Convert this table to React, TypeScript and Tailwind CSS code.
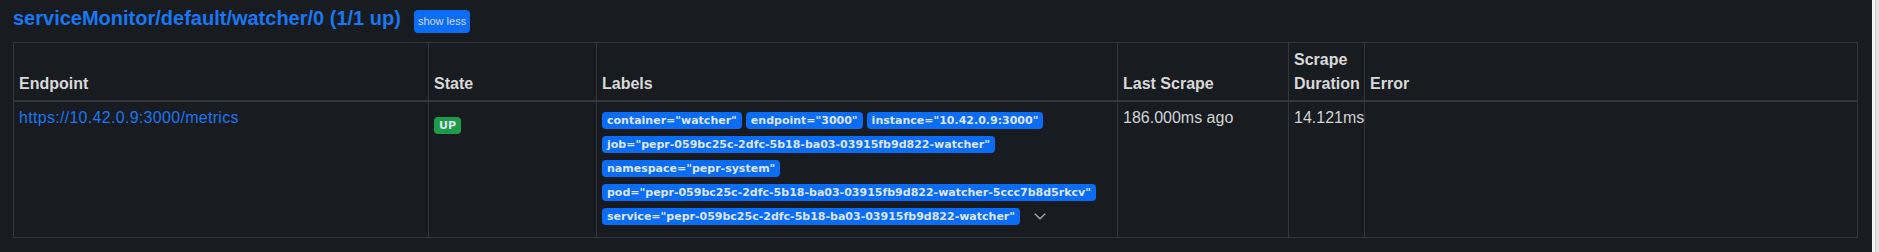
import React from 'react'

const LABELS = [
  'container="watcher"',
  'endpoint="3000"',
  'instance="10.42.0.9:3000"',
  'job="pepr-059bc25c-2dfc-5b18-ba03-03915fb9d822-watcher"',
  'namespace="pepr-system"',
  'pod="pepr-059bc25c-2dfc-5b18-ba03-03915fb9d822-watcher-5ccc7b8d5rkcv"',
  'service="pepr-059bc25c-2dfc-5b18-ba03-03915fb9d822-watcher"',
]

const HEADERS = ['Endpoint', 'State', 'Labels', 'Last Scrape', 'Scrape Duration', 'Error']

function Badge({ children, color = 'bg-[#0b6cf5]' }: { children: React.ReactNode; color?: string }) {
  return (
    <span
      className={`inline-flex h-[17px] items-center whitespace-nowrap rounded-[4px] px-[5px] font-['DejaVu_Sans',sans-serif] text-[11px] font-bold leading-none text-[#dfe5ee] ${color}`}
    >
      {children}
    </span>
  )
}

function Chevron() {
  return (
    <span className="ml-[10px] flex h-[17px] items-center">
      <svg width="12" height="7" viewBox="0 0 12 7" fill="none">
        <polyline points="0.8,0.8 6,5.8 11.2,0.8" stroke="#a3a6ab" strokeWidth="1.4" />
      </svg>
    </span>
  )
}

const cell = 'border-b border-r border-[#33373c] px-[5px]'

export default function App() {
  return (
    <div className="flex min-h-[252px] bg-[#181b1f] font-['Liberation_Sans',Arial,sans-serif] text-[#d2d3d5]">
      <div className="flex-1 pl-[13px] pr-[14px]">
        {/* title */}
        <div className="flex h-[42px] items-start pt-[6px]">
          <a className="text-[20px] font-bold leading-[24px] text-[#1877f2]">
            serviceMonitor/default/watcher/0 (1/1 up)
          </a>
          <button className="ml-[13px] mt-[4px] h-[23px] rounded-[4px] bg-[#0b6cf5] px-[4px] text-[11px] leading-[23px] text-[#d3dbe8]">
            show less
          </button>
        </div>

        {/* table */}
        <div className="grid grid-cols-[415px_168px_521px_171px_76px_1fr] border-l border-t border-[#33373c]">
          {HEADERS.map((h) => (
            <div
              key={h}
              className="flex items-end border-b-2 border-r border-[#33373c] px-[5px] pb-[4px] pt-[5px] text-[16px] font-bold leading-[24px] text-[#d9d9da]"
            >
              {h}
            </div>
          ))}

          <div className={`${cell} h-[136px] pt-[4px] text-[16px] leading-[24px]`}>
            <a className="tracking-[0.3px] text-[#1877f2]">https://10.42.0.9:3000/metrics</a>
          </div>
          <div className={`${cell} h-[136px] pt-[10px]`}>
            <Badge color="bg-[#1c9c48]">UP</Badge>
          </div>
          <div className={`${cell} flex h-[136px] flex-wrap content-start gap-x-[4px] gap-y-[7px] pt-[10px]`}>
            {LABELS.map((l) => (
              <Badge key={l}>{l}</Badge>
            ))}
            <Chevron />
          </div>
          <div className={`${cell} h-[136px] pt-[4px] text-[16px] leading-[24px]`}>186.000ms ago</div>
          <div className={`${cell} h-[136px] pt-[4px] text-[16px] leading-[24px]`}>14.121ms</div>
          <div className={`${cell} h-[136px]`} />
        </div>
      </div>

      {/* scrollbar */}
      <div className="flex w-[7px]">
        <div className="w-[3px] bg-[#f3f3f3]" />
        <div className="w-[4px] border-l border-[#c9c9c9] bg-[#e2e2e2]" />
      </div>
    </div>
  )
}
